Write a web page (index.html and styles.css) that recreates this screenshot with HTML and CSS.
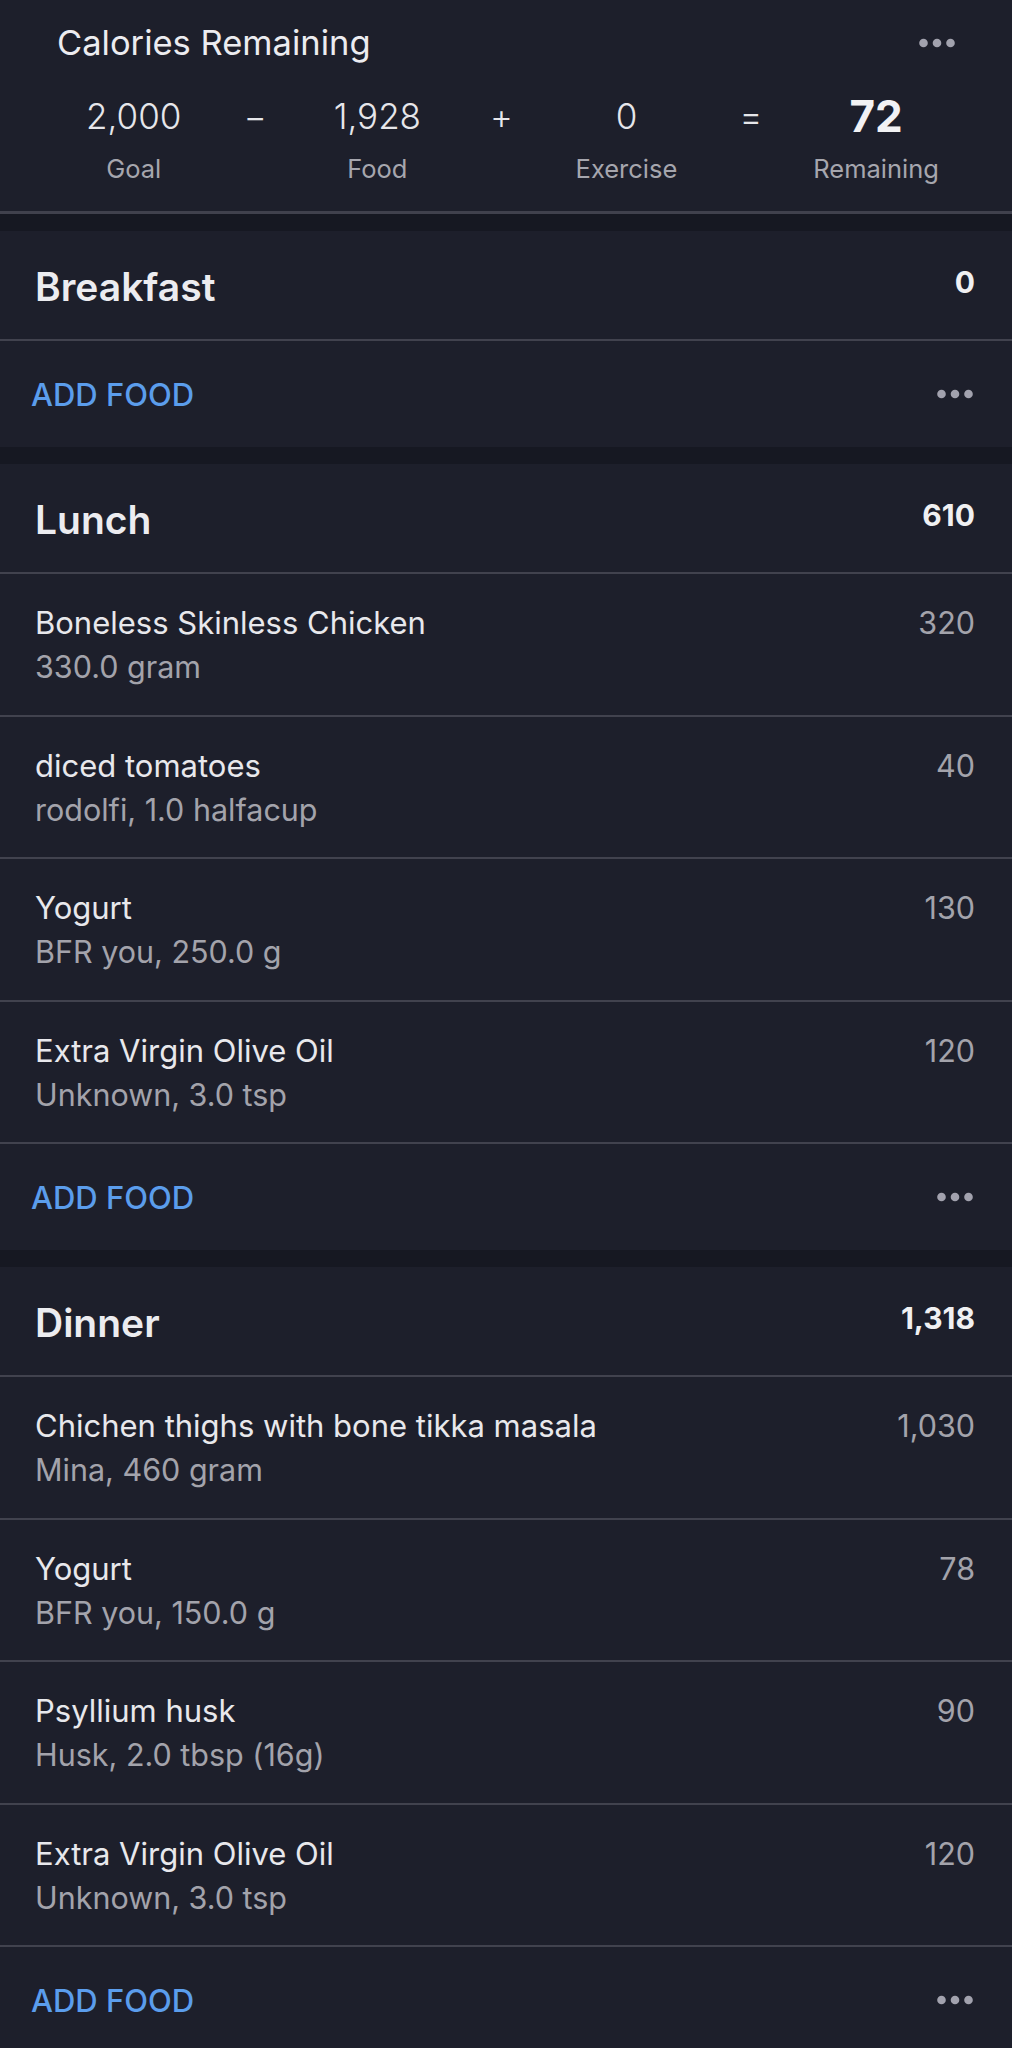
FILE: index.html
```html
<!DOCTYPE html>
<html lang="en">
<head>
  <meta charset="UTF-8" />
  <meta name="viewport" content="width=device-width, initial-scale=1" />
  <title>Diary</title>
  <link rel="stylesheet" href="styles.css">
</head>
<body>
  <div class="summary">
    <div class="summary-top">
      <span class="summary-title">Calories Remaining</span>
      <svg class="more" width="36" height="10" viewBox="0 0 36 10"><circle cx="4.5" cy="5" r="4.3"/><circle cx="18" cy="5" r="4.3"/><circle cx="31.5" cy="5" r="4.3"/></svg>
    </div>
    <div class="equation">
      <div class="term"><span class="value">2,000</span><span class="label">Goal</span></div>
      <div class="term"><span class="value">&minus;</span></div>
      <div class="term"><span class="value">1,928</span><span class="label">Food</span></div>
      <div class="term"><span class="value">+</span></div>
      <div class="term"><span class="value">0</span><span class="label">Exercise</span></div>
      <div class="term"><span class="value">=</span></div>
      <div class="term"><span class="value total">72</span><span class="label">Remaining</span></div>
    </div>
  </div>

  <section class="meal">
    <div class="meal-head">
      <h2>Breakfast</h2>
      <span class="meal-total">0</span>
    </div>
    <div class="meal-foot">
      <span class="add-food">ADD FOOD</span>
      <svg class="more" width="36" height="10" viewBox="0 0 36 10"><circle cx="4.5" cy="5" r="4.3"/><circle cx="18" cy="5" r="4.3"/><circle cx="31.5" cy="5" r="4.3"/></svg>
    </div>
  </section>

  <section class="meal">
    <div class="meal-head">
      <h2>Lunch</h2>
      <span class="meal-total">610</span>
    </div>
    <div class="entry">
      <div class="entry-info">
        <span class="entry-name">Boneless Skinless Chicken</span>
        <span class="entry-detail">330.0 gram</span>
      </div>
      <span class="entry-cal">320</span>
    </div>
    <div class="entry">
      <div class="entry-info">
        <span class="entry-name">diced tomatoes</span>
        <span class="entry-detail">rodolfi, 1.0 halfacup</span>
      </div>
      <span class="entry-cal">40</span>
    </div>
    <div class="entry">
      <div class="entry-info">
        <span class="entry-name">Yogurt</span>
        <span class="entry-detail">BFR you, 250.0 g</span>
      </div>
      <span class="entry-cal">130</span>
    </div>
    <div class="entry">
      <div class="entry-info">
        <span class="entry-name">Extra Virgin Olive Oil</span>
        <span class="entry-detail">Unknown, 3.0 tsp</span>
      </div>
      <span class="entry-cal">120</span>
    </div>
    <div class="meal-foot">
      <span class="add-food">ADD FOOD</span>
      <svg class="more" width="36" height="10" viewBox="0 0 36 10"><circle cx="4.5" cy="5" r="4.3"/><circle cx="18" cy="5" r="4.3"/><circle cx="31.5" cy="5" r="4.3"/></svg>
    </div>
  </section>

  <section class="meal">
    <div class="meal-head">
      <h2>Dinner</h2>
      <span class="meal-total">1,318</span>
    </div>
    <div class="entry">
      <div class="entry-info">
        <span class="entry-name">Chichen thighs with bone tikka masala</span>
        <span class="entry-detail">Mina, 460 gram</span>
      </div>
      <span class="entry-cal">1,030</span>
    </div>
    <div class="entry">
      <div class="entry-info">
        <span class="entry-name">Yogurt</span>
        <span class="entry-detail">BFR you, 150.0 g</span>
      </div>
      <span class="entry-cal">78</span>
    </div>
    <div class="entry">
      <div class="entry-info">
        <span class="entry-name">Psyllium husk</span>
        <span class="entry-detail">Husk, 2.0 tbsp (16g)</span>
      </div>
      <span class="entry-cal">90</span>
    </div>
    <div class="entry">
      <div class="entry-info">
        <span class="entry-name">Extra Virgin Olive Oil</span>
        <span class="entry-detail">Unknown, 3.0 tsp</span>
      </div>
      <span class="entry-cal">120</span>
    </div>
    <div class="meal-foot">
      <span class="add-food">ADD FOOD</span>
      <svg class="more" width="36" height="10" viewBox="0 0 36 10"><circle cx="4.5" cy="5" r="4.3"/><circle cx="18" cy="5" r="4.3"/><circle cx="31.5" cy="5" r="4.3"/></svg>
    </div>
  </section>
</body>
</html>
```

FILE: styles.css
```css
body {
  margin: 0;
  font-family: Inter, "Noto Sans", sans-serif;
  background: #161822;
  color: #ececf0;
  display: flex;
  flex-direction: column;
  gap: 17px;
}
.more {
  display: block;
  fill: #a2a2ae;
}

.summary {
  background: #1d1f2b;
  padding: 23px 0 27px;
  border-bottom: 3px solid #40414d;
}
.summary-top {
  display: flex;
  justify-content: space-between;
  align-items: center;
  padding: 0 57px;
  height: 40px;
}
.summary-title {
  font-size: 34.5px;
  line-height: 40px;
}
.equation {
  display: grid;
  grid-template-columns: 121fr 121fr 122fr 125fr 124fr 124fr 125fr;
  padding: 0 73px;
  margin-top: 29px;
}
.term {
  display: flex;
  flex-direction: column;
  align-items: center;
  gap: 14px;
}
.value {
  font-size: 35px;
  line-height: 48px;
  font-weight: 300;
  color: #e6e6ea;
}
.value.total {
  font-size: 44px;
  font-weight: 700;
  color: #f2f2f4;
}
.label {
  font-size: 25.5px;
  line-height: 30px;
  color: #a6a6ae;
}

.meal {
  background: #1d1f2b;
}
.meal-head {
  display: flex;
  justify-content: space-between;
  align-items: flex-start;
  height: 110px;
  box-sizing: border-box;
  padding: 34px 37px 0 35px;
  border-bottom: 2px solid #41424e;
}
.meal-head h2 {
  margin: 0;
  font-size: 39px;
  line-height: 44px;
  font-weight: 600;
  color: #ececf0;
}
.meal-total {
  font-size: 30px;
  line-height: 34px;
  font-weight: 700;
  color: #f0f0f2;
}
.entry {
  display: flex;
  justify-content: space-between;
  align-items: flex-start;
  height: 142.5px;
  box-sizing: border-box;
  padding: 27px 37px 0 35px;
  border-bottom: 2px solid #41424e;
}
.entry-info {
  display: flex;
  flex-direction: column;
}
.entry-name {
  font-size: 31px;
  line-height: 44px;
  color: #e8e8ec;
}
.entry-detail {
  font-size: 30.5px;
  line-height: 44px;
  color: #a3a3ab;
}
.entry-cal {
  font-size: 30.5px;
  line-height: 44px;
  color: #a3a3ab;
}
.meal-foot {
  display: flex;
  justify-content: space-between;
  align-items: center;
  height: 106px;
  padding: 0 39px 0 31px;
}
.add-food {
  font-size: 31px;
  font-weight: 500;
  color: #5b9dec;
}
```
